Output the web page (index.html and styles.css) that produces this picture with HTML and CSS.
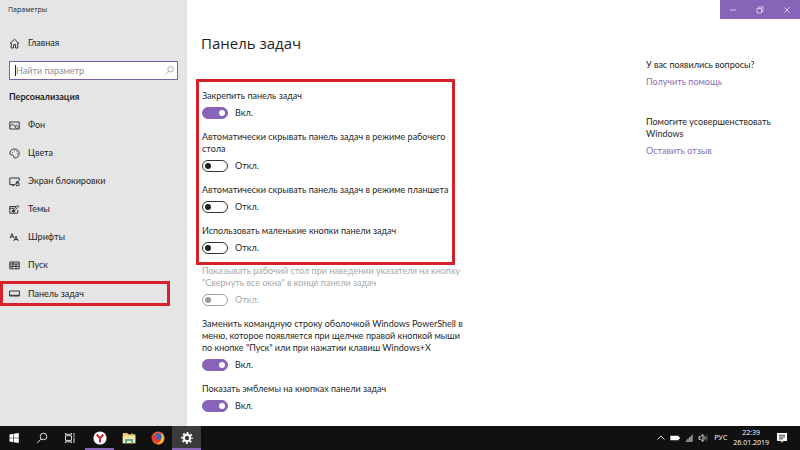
FILE: index.html
```
<!DOCTYPE html>
<html lang="ru">
<head>
  <meta charset="UTF-8">
  <meta name="viewport" content="width=device-width, initial-scale=1.0">
  <title>Параметры</title>
  <link rel="stylesheet" href="styles.css">
</head>
<body>
  <div class="window">
    <aside class="sidebar">
      <div class="app-title">Параметры</div>
      <a class="nav-link home" href="#">
        <svg class="icon" viewBox="0 0 11 11"><path d="M1 5.5 5.5 1.2 10 5.5M2.2 4.6V10h2.3V6.6h2V10h2.3V4.6"/></svg>
        Главная
      </a>
      <div class="search">
        <input class="search-input" type="text" placeholder="Найти параметр" aria-label="Найти параметр">
        <svg class="search-icon" viewBox="0 0 11 11"><circle cx="6.6" cy="4.2" r="2.8"/><path d="M4.6 6.2 1.5 9.4"/></svg>
        <span class="caret"></span>
      </div>
      <h2 class="section-title">Персонализация</h2>
      <nav class="nav">
        <a class="nav-link" href="#">
          <svg class="icon" viewBox="0 0 11 11"><path d="M.8 2h9.4v7H.8zM1 6l2.500-2L8 8.8M6 6.4l1.6-1.2L10 7.6"/></svg>
          Фон
        </a>
        <a class="nav-link" href="#">
          <svg class="icon" viewBox="0 0 11 11"><path d="M1 6.2C.5 3 3 1 5.6 1 8.400 1 10.300 3 10.200 5.600 10 8.500 7.600 10.200 5.800 10c-1.500-.2-.6-1.800-1.500-2.700C3.400 6.400 1.600 7.600 1 6.200z"/><path d="M3 4.300h.8M5 2.900h.8M7.300 3.700h.8M8 6h.8"/></svg>
          Цвета
        </a>
        <a class="nav-link" href="#">
          <svg class="icon" viewBox="0 0 11 11"><path d="M6 8.600H.8V2h9.400v3M7 7h3v2.600H7zM7.700 7V5.600h1.600V7M3 9.600h2"/></svg>
          Экран блокировки
        </a>
        <a class="nav-link" href="#">
          <svg class="icon" viewBox="0 0 11 11"><path d="M7 2.500H.8v6.700h8V6M.8 4.300h4M3 7.600l1.200-2L8.600 1.300l1.200 1.200L5.400 6.900z"/><path d="M4 6.500h1.500v1.500H4z"/></svg>
          Темы
        </a>
        <a class="nav-link" href="#">
          <svg class="icon" viewBox="0 0 11 11"><path d="M1 6.200 3 1.600l2 4.600M1.700 4.800h2.600M5 9l2-4.800L9 9M5.700 7.500h2.600"/></svg>
          Шрифты
        </a>
        <a class="nav-link" href="#">
          <svg class="icon" viewBox="0 0 11 11"><path d="M.8 2h9.400v6.800H.8zM.8 4h9.400M.8 6.300h9.400M4 2v4.300M7 4v4.800M3 6.300v2.500"/></svg>
          Пуск
        </a>
        <a class="nav-link marked" href="#">
          <svg class="icon" viewBox="0 0 11 11"><path d="M.6 3h9.800v5H.6zM.6 7.300h9.800"/></svg>
          Панель задач
        </a>
      </nav>
    </aside>

    <main class="content">
      <h1 class="page-title">Панель задач</h1>
      <div class="settings">
        <div class="marked group">
          <div class="setting">
            <label for="lock">Закрепить панель задач</label>
            <div class="row"><input class="toggle" type="checkbox" id="lock" checked><span>Вкл.</span></div>
          </div>
          <div class="setting">
            <label for="hide-desktop">Автоматически скрывать панель задач в режиме рабочего<br>стола</label>
            <div class="row"><input class="toggle" type="checkbox" id="hide-desktop"><span>Откл.</span></div>
          </div>
          <div class="setting">
            <label for="hide-tablet">Автоматически скрывать панель задач в режиме планшета</label>
            <div class="row"><input class="toggle" type="checkbox" id="hide-tablet"><span>Откл.</span></div>
          </div>
          <div class="setting">
            <label for="small">Использовать маленькие кнопки панели задач</label>
            <div class="row"><input class="toggle" type="checkbox" id="small"><span>Откл.</span></div>
          </div>
        </div>
        <div class="group rest">
          <div class="setting disabled">
            <label for="peek">Показывать рабочий стол при наведении указателя на кнопку<br>"Свернуть все окна" в конце панели задач</label>
            <div class="row"><input class="toggle" type="checkbox" id="peek" disabled><span>Откл.</span></div>
          </div>
          <div class="setting">
            <label for="powershell">Заменить командную строку оболочкой Windows PowerShell в<br>меню, которое появляется при щелчке правой кнопкой мыши<br>по кнопке "Пуск" или при нажатии клавиш Windows+X</label>
            <div class="row"><input class="toggle" type="checkbox" id="powershell" checked><span>Вкл.</span></div>
          </div>
          <div class="setting">
            <label for="badges">Показать эмблемы на кнопках панели задач</label>
            <div class="row"><input class="toggle" type="checkbox" id="badges" checked><span>Вкл.</span></div>
          </div>
        </div>
      </div>
    </main>

    <aside class="side">
      <div class="controls">
        <button class="control" aria-label="Свернуть"><svg viewBox="0 0 8 8"><path d="M1 4h6"/></svg></button>
        <button class="control" aria-label="Восстановить"><svg viewBox="0 0 8 8"><path d="M1 2.500h4.500V7H1zM2.500 2.500V1H7v4.500H5.500"/></svg></button>
        <button class="control" aria-label="Закрыть"><svg viewBox="0 0 8 8"><path d="M1.300 1.300l5.400 5.400M6.700 1.300 1.300 6.700"/></svg></button>
      </div>
      <div class="help">
        <p>У вас появились вопросы?</p>
        <a href="#">Получить помощь</a>
      </div>
      <div class="help">
        <p>Помогите усовершенствовать<br>Windows</p>
        <a href="#">Оставить отзыв</a>
      </div>
    </aside>
  </div>

  <footer class="taskbar">
    <div class="system">
      <button class="task" aria-label="Пуск">
        <svg viewBox="0 0 14 14"><path fill="#fff" d="M2.500 3.400l3.900-.6v3.900H2.500zM7 2.700l4.800-.7v4.700H7zM2.500 7.300h3.900v3.900l-3.900-.6zM7 7.300h4.800V12L7 11.300z"/></svg>
      </button>
      <button class="task" aria-label="Поиск">
        <svg class="line" viewBox="0 0 14 14"><circle cx="8.500" cy="5.500" r="3.300"/><path d="M6.200 7.900 2.300 11.900"/></svg>
      </button>
      <button class="task" aria-label="Представление задач">
        <svg class="line" viewBox="0 0 14 14"><path d="M2.500 4.800h6v4.600h-6zM2.500 2v1.300h6V2M2.500 12v-1.200h6V12M11 2v2.500M11 7v5M10.300 5.700h1.500"/></svg>
      </button>
    </div>
    <div class="apps">
      <button class="task running" aria-label="Яндекс.Браузер">
        <svg viewBox="0 0 14 14"><circle cx="7" cy="7" r="6.600" fill="#fff"/><path fill="none" stroke="#d8232a" stroke-width="2" d="M3.700 3.500 7 7.300l3.300-3.800M7 7v4.500"/></svg>
      </button>
      <button class="task" aria-label="Проводник">
        <svg viewBox="0 0 14 14"><path fill="#e9c35c" d="M.8 2h4.500l1 1.200h7v9H.8z"/><path fill="#f9e7a0" d="M.8 4.500h12.500v7.700H.8z"/><path fill="#58aeb5" d="M3 8h8v4.200H9V10H5v2.200H3z"/><path fill="#8cc870" d="M9 2.500h2v2H9z"/></svg>
      </button>
      <button class="task" aria-label="Firefox">
        <svg viewBox="0 0 14 14"><circle cx="7" cy="7" r="6.400" fill="#f0592a"/><path fill="#ffb52e" d="M10 1.400C13.500 3.500 14.400 8 12 11c-1.500 2-4 2.700-6.500 2.200C9 12 11 9 10 1.400z"/><circle cx="7" cy="5.800" r="3.500" fill="#2868c8"/><path fill="#e23b35" d="M1 3.500 3 5l2.500-.3L6.800 6 5 7.200c.8 1.700 3 1.800 4.800.8-.6 2.500-4 3.700-6.500 2.200C1.200 9 .4 6 1 3.500z"/></svg>
      </button>
      <button class="task running active" aria-label="Параметры">
        <svg viewBox="0 0 14 14"><g fill="none" stroke="#fff"><circle cx="7" cy="7" r="3.200" stroke-width="2"/><circle cx="7" cy="7" r="5" stroke-width="1.800" stroke-dasharray="2 1.927" stroke-dashoffset="1"/></g></svg>
      </button>
    </div>

    <div class="tray">
      <svg class="line" viewBox="0 0 10 10"><path d="M1.500 6.500 5 3l3.500 3.500"/></svg>
      <svg viewBox="0 0 10 10"><path fill="#fff" d="M.3 2.800h8.400v1.300h1v1.800h-1v1.300H.3z"/></svg>
      <svg viewBox="0 0 10 10"><path fill="#666" d="M9 1v8H1z"/><path fill="none" stroke="#bbb" stroke-width=".8" d="M3 9c0-1.500 0-2 .5-3M5 9c0-2 .5-4 1-5M7 9c0-3 .5-5 1.500-7"/></svg>
      <svg class="line" viewBox="0 0 10 10"><path d="M1 3.700h1.600L5 1.500v7L2.600 6.300H1zM6.500 3.500c.8 1 .8 2 0 3"/><path stroke="#777" d="M8 2.200c1.400 1.800 1.400 3.800 0 5.600"/></svg>
      <span class="lang">РУС</span>
      <div class="clock"><time>22:39</time><time>26.01.2019</time></div>
      <svg class="notes" viewBox="0 0 12 12"><path fill="#fff" d="M1 1h10v8H7.500L5.500 11V9H1z"/><path fill="none" stroke="#111" stroke-width=".8" d="M3 3.300h6M3 5.100h6M3 6.900h4"/></svg>
    </div>
  </footer>
</body>
</html>
```
FILE: styles.css
```
* {
  box-sizing: border-box;
}

body {
  margin: 0;
  display: flex;
  flex-direction: column;
  height: 100vh;
  overflow: hidden;
  background: #fff;
  color: #1f1f1f;
  font: 9px/12px Lato, "Open Sans", sans-serif;
}

h1, h2, p {
  margin: 0;
}

a {
  text-decoration: none;
}

button {
  border: 0;
  padding: 0;
  display: flex;
  align-items: center;
  justify-content: center;
}

.window {
  flex: 1;
  min-height: 0;
  display: flex;
  overflow: hidden;
}

.sidebar {
  width: 187px;
  flex-shrink: 0;
  background: #e5e5e5;
}

.app-title {
  padding: 4px 8px 0;
  font-family: "Open Sans", sans-serif;
  font-size: 7px;
}

.nav-link {
  display: flex;
  align-items: center;
  gap: 8px;
  height: 28px;
  padding-left: 9px;
  color: #1f1f1f;
}

.home {
  margin-top: 13px;
}

.icon {
  width: 11px;
  height: 11px;
  fill: none;
  stroke: #222;
  stroke-width: .9;
}

.search {
  position: relative;
  margin: 4px 9px 0;
}

.search-input {
  display: block;
  width: 100%;
  height: 19px;
  padding: 0 22px 0 6px;
  border: 1px solid #7a62a8;
  border-radius: 0;
  outline: 0;
  background: #fff;
  font: inherit;
}

.search-input::placeholder {
  color: #929292;
}

.search-icon {
  position: absolute;
  top: 4px;
  right: 3px;
  width: 11px;
  height: 11px;
  fill: none;
  stroke: #999;
  stroke-width: .8;
}

.caret {
  position: absolute;
  top: 4px;
  left: 6px;
  width: 1px;
  height: 11px;
  background: #222;
}

.section-title {
  padding: 11px 9px 0;
  font-size: 9px;
  line-height: 12px;
}

.nav {
  margin-top: 8px;
}

.marked {
  border: 3px solid #d6202c;
}

.nav-link.marked {
  height: 25px;
  margin: 2px 17px 0 0;
  padding-left: 6px;
}

.content {
  flex: 1;
  min-width: 0;
  padding: 31px 0 0 9px;
}

.page-title {
  padding-left: 5px;
  font-family: "Open Sans", sans-serif;
  font-size: 15px;
  font-weight: 400;
  line-height: 24px;
}

.settings {
  width: 264px;
  margin-top: 24px;
}

.group {
  display: flex;
  flex-direction: column;
  gap: 12px;
}

.group.marked {
  width: 259px;
  padding: 8px 3px;
}

.rest {
  padding-left: 6px;
}

.setting label {
  display: block;
  white-space: nowrap;
}

.row {
  display: flex;
  align-items: center;
  gap: 7px;
  height: 12px;
  margin-top: 5px;
}

.toggle {
  appearance: none;
  display: flex;
  align-items: center;
  width: 26px;
  height: 12px;
  margin: 0;
  padding: 0 2px;
  border: 1px solid #333;
  border-radius: 6px;
}

.toggle::before {
  content: "";
  width: 6px;
  height: 6px;
  border-radius: 50%;
  background: #222;
}

.toggle:checked {
  justify-content: flex-end;
  border-color: #8764b8;
  background: #8764b8;
}

.toggle:checked::before {
  background: #fff;
}

.disabled {
  color: #a8a8a8;
}

.disabled .toggle {
  border-color: #a0a0a0;
}

.disabled .toggle::before {
  background: #999;
}

.side {
  width: 154px;
  flex-shrink: 0;
}

.controls {
  display: flex;
  width: 80px;
  height: 19px;
  margin: 0 0 40px auto;
  background: #8764b8;
}

.control {
  flex: 1;
  background: none;
}

.control svg {
  width: 8px;
  height: 8px;
  fill: none;
  stroke: #e8e0f2;
  stroke-width: .8;
}

.help {
  margin-bottom: 28px;
}

.help a {
  display: block;
  margin-top: 5px;
  color: #8b6fb5;
}

.taskbar {
  display: flex;
  height: 24px;
  flex-shrink: 0;
  background: #111;
  color: #fff;
}

.system, .apps {
  display: flex;
}

.apps {
  margin-left: 1px;
}

.task {
  width: 28px;
  border: 0 solid transparent;
  border-width: 2px 0;
  background: none;
}

.apps .task {
  width: 29px;
}

.task svg {
  width: 14px;
  height: 14px;
}

.line {
  fill: none;
  stroke: #ddd;
  stroke-width: 1;
}

.running {
  border-bottom-color: #8764b8;
}

.active {
  border-top-color: #3b3b3b;
  background: #3b3b3b;
}

.tray {
  display: flex;
  align-items: center;
  gap: 4px;
  margin-left: auto;
  padding-right: 12px;
  font-family: "Open Sans", sans-serif;
  font-size: 7px;
}

.tray svg {
  width: 10px;
  height: 10px;
}

.tray .notes {
  width: 12px;
  height: 12px;
}

.lang {
  margin: 0 2px;
}

.clock {
  margin-right: 3px;
  text-align: center;
  line-height: 10px;
}

.clock time {
  display: block;
}
```
